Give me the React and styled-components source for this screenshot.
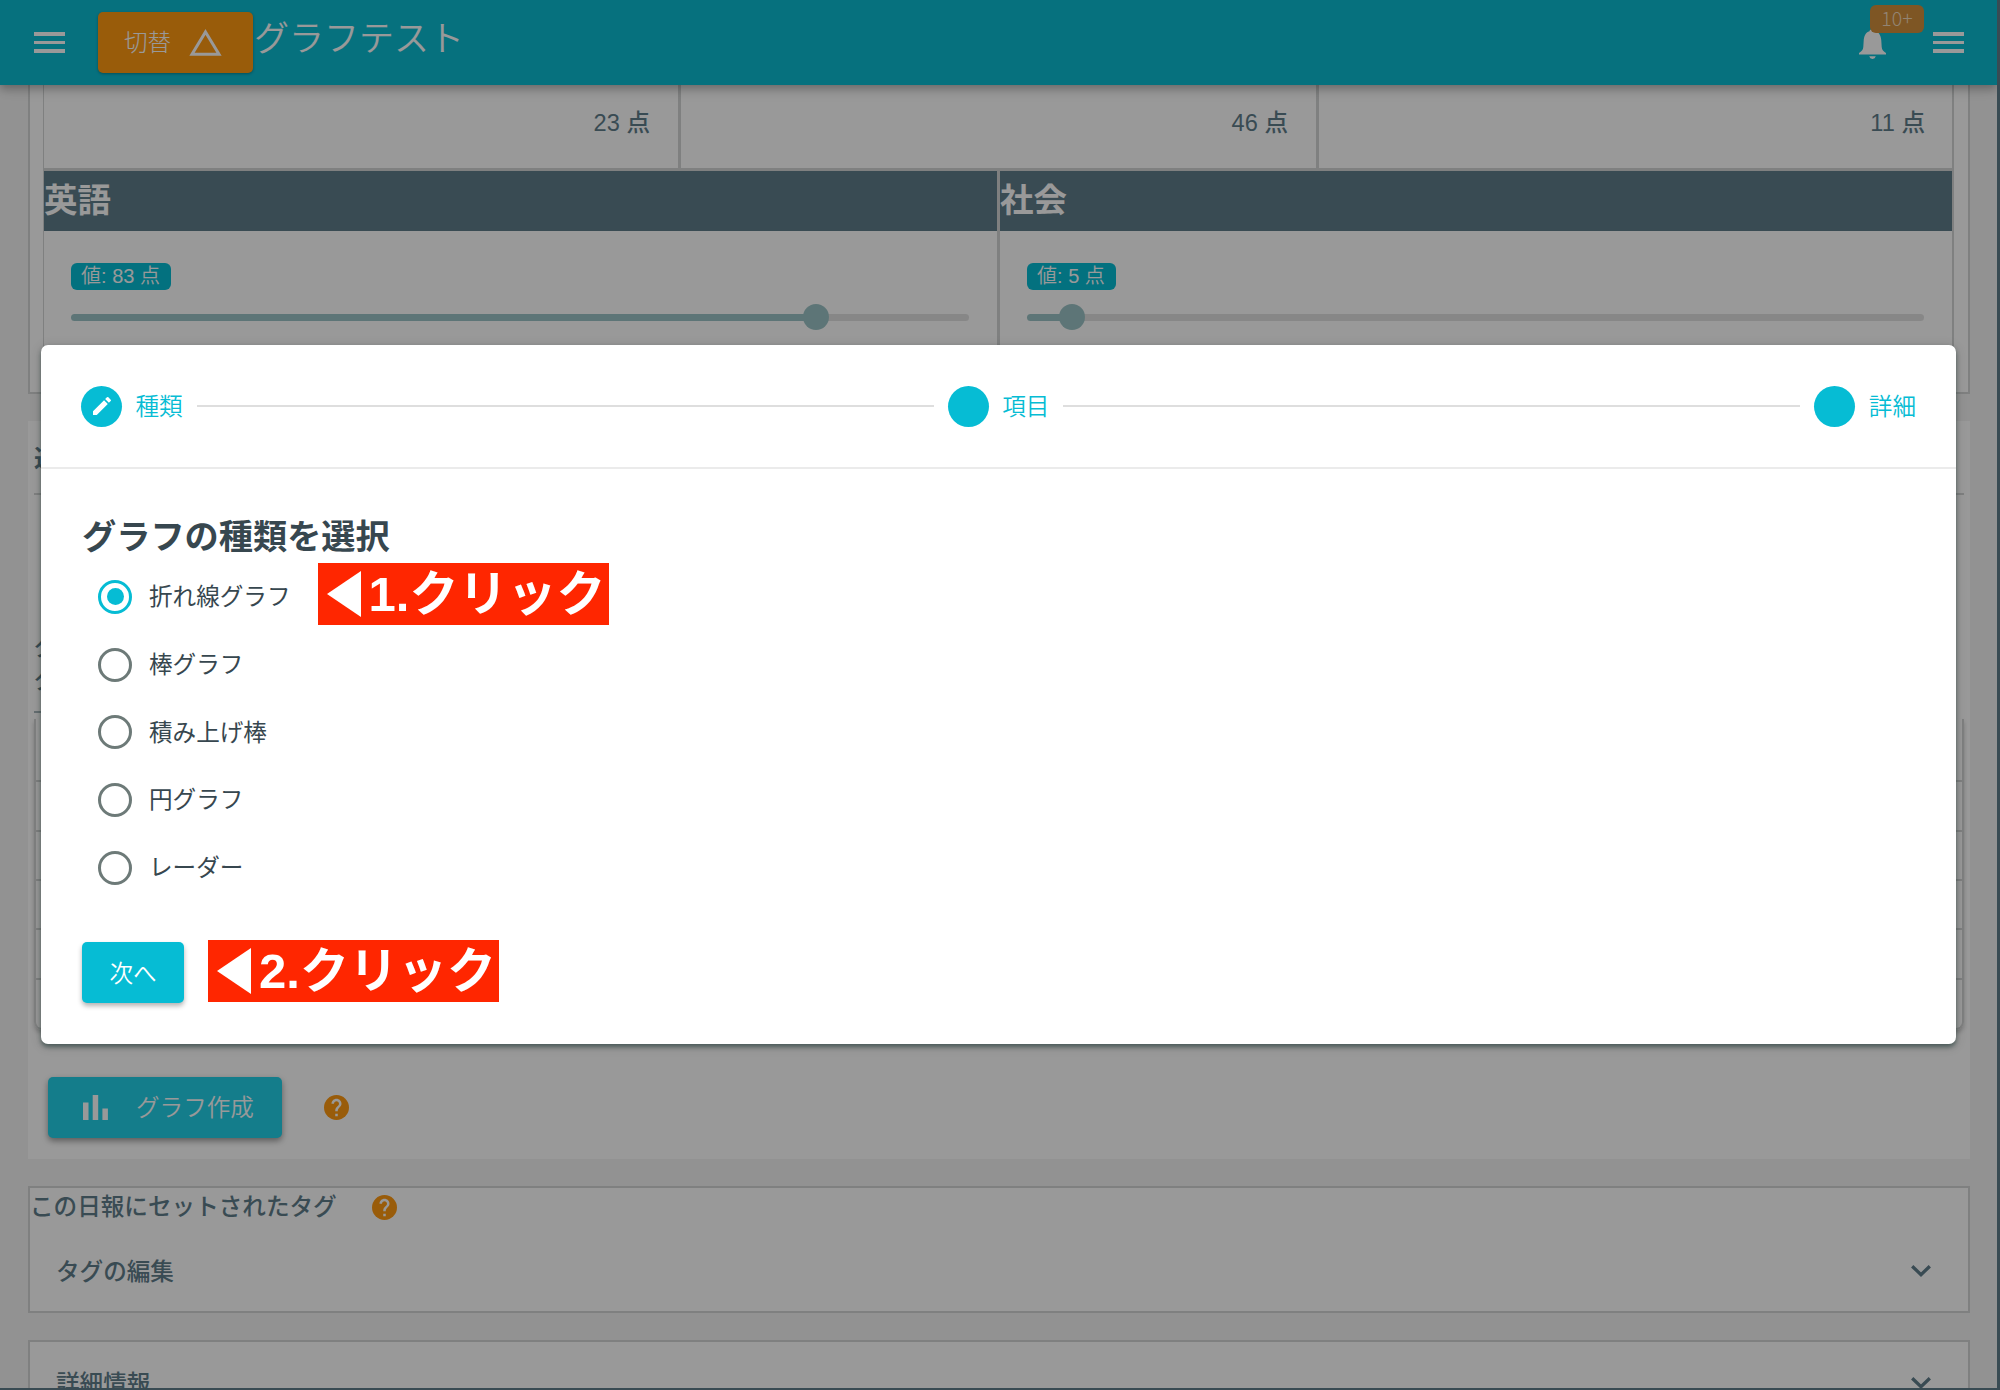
import React from "react";
import styled, { createGlobalStyle } from "styled-components";

const C = {
  cyan: "#06bcd4",
  slate: "#607d8b",
  ink: "#37474f",
  line: "#d4d6d6",
  page: "#f4f4f4",
};

const Global = createGlobalStyle`
  *, *::before, *::after { box-sizing: border-box; }
  html, body { margin: 0; padding: 0; background: ${C.slate}; }
  body {
    font-family: "Liberation Sans", "Noto Sans CJK JP", sans-serif;
    font-size: 23.6px;
    color: ${C.slate};
    overflow: hidden;
  }
  svg { display: block; flex: none; }
`;

const Screen = styled.div`
  position: relative;
  width: 2000px;
  height: 1390px;
  overflow: hidden;
  padding: 0 3px 2px 0;
`;
const Page = styled.div`
  display: flex;
  flex-direction: column;
  height: 1388px;
  background: ${C.page};
  overflow: hidden;
`;
const AppBar = styled.header`
  display: flex;
  align-items: flex-start;
  flex: none;
  height: 85px;
  padding: 12px 33px 0 34px;
  background: #0bbcd3;
  color: #fff;
  box-shadow: 0 3px 8px rgba(0, 0, 0, 0.22), 0 6px 12px rgba(0, 0, 0, 0.12);
  z-index: 1;
`;
const MenuButton = styled.button`
  display: flex;
  flex-direction: column;
  justify-content: space-between;
  width: 31px;
  height: 21px;
  margin: 20px 0 0;
  padding: 0;
  border: 0;
  background: none;
  i { height: 3.7px; background: #fff; }
`;
const SwitchButton = styled.button`
  display: flex;
  align-items: center;
  gap: 18px;
  width: 155px;
  height: 61px;
  margin-left: 33px;
  padding: 0 0 0 26px;
  border: 0;
  border-radius: 5px;
  background: #ff9a12;
  color: #fff;
  font: inherit;
  font-weight: 300;
  box-shadow: 0 1px 3px rgba(0, 0, 0, 0.3);
`;
const AppTitle = styled.h1`
  flex: 1;
  margin: 0;
  padding-left: 1px;
  font-size: 35px;
  font-weight: 350;
  line-height: 54px;
  white-space: nowrap;
`;
const BellWrap = styled.div`
  position: relative;
  margin: 17px 47px 0 0;
`;
const Count = styled.span`
  position: absolute;
  left: 11px;
  top: -24px;
  width: 54px;
  height: 28px;
  border-radius: 6px;
  background: #d28f3c;
  color: #f4dcc0;
  font-family: "Noto Sans CJK JP", sans-serif;
  font-weight: 300;
  font-size: 19.5px;
  line-height: 26px;
  text-align: center;
`;
const Label = styled.span`
  padding-bottom: ${(p) => p.$lift || 3}px;
  white-space: nowrap;
`;
const Body = styled.main`
  display: flex;
  flex-direction: column;
  padding: 0 27px 0 28px;
  font-weight: 500;
`;
const ScoreCard = styled.section`
  height: 309px;
  padding: 0 14px 0 13px;
  border: 2px solid ${C.line};
  border-top: 0;
  background: #fff;
`;
const ScoreTable = styled.div`
  height: 290px;
  border: solid ${C.line};
  border-width: 0 2px 0 1px;
`;
const Scores = styled.div`
  display: grid;
  grid-template-columns: 637px 638px 1fr;
  height: 86px;
  border-bottom: 3px solid ${C.line};
`;
const Score = styled.div`
  border-right: ${(p) => (p.$last ? 0 : "3px")} solid ${C.line};
  padding-right: ${(p) => (p.$last ? 27 : 28)}px;
  text-align: right;
  line-height: 77px;
`;
const Subjects = styled.div`
  display: grid;
  grid-template-columns: 956px 1fr;
  height: 200px;
`;
const Subject = styled.div`
  border-right: ${(p) => (p.$last ? 0 : "3px")} solid ${C.line};
`;
const SubjectName = styled.h2`
  margin: 0;
  height: 60px;
  background: ${C.slate};
  color: #fff;
  font-size: 33.5px;
  line-height: 60px;
`;
const SubjectBody = styled.div`
  padding: 32px 28px 0 27px;
`;
const Value = styled.span`
  display: block;
  width: fit-content;
  height: 27px;
  padding: 0 11px 0 10px;
  border-radius: 6px;
  background: ${C.cyan};
  color: #fff;
  font-size: 20px;
  font-weight: 350;
  line-height: 27px;
`;
const Slider = styled.div`
  display: flex;
  align-items: center;
  height: 26px;
  margin-top: 14px;
`;
const Filled = styled.div`
  height: 7px;
  border-radius: 4px 0 0 4px;
  background: #9cc4c6;
`;
const Thumb = styled.div`
  width: 26px;
  height: 26px;
  margin: 0 -13px;
  border-radius: 50%;
  background: #9cc4c6;
  z-index: 1;
`;
const Rest = styled.div`
  flex: 1;
  height: 7px;
  border-radius: 0 4px 4px 0;
  background: #e2e2e2;
`;
const ChartCard = styled.section`
  display: flex;
  flex-direction: column;
  height: 738px;
  margin: 27px 0;
  padding: 20px 6px 0;
  background: #fff;
`;
const ChartTitle = styled.h3`
  margin: 0;
  height: 54px;
  font-size: 24px;
  line-height: 36px;
  border-bottom: 2px solid #d4d6d6;
`;
const Notes = styled.div`
  width: 50%;
  height: 218px;
  padding-top: 136px;
  border-bottom: 2px solid #a9b8bd;
  font-size: 23px;
  line-height: 33px;
`;
const Records = styled.div`
  height: 311px;
  margin-top: 6px;
  padding-top: 13px;
  border: 2px solid ${C.line};
  border-top: 0;
  border-radius: 0 0 8px 8px;
  box-shadow: 0 3px 4px rgba(0, 0, 0, 0.2);
`;
const Record = styled.div`
  height: ${(p) => p.$h}px;
  border-bottom: 2px solid ${C.line};
`;
const Actions = styled.div`
  display: flex;
  align-items: center;
  gap: 42px;
  margin-top: 47px;
  padding-left: 14px;
`;
const CreateButton = styled.button`
  display: flex;
  align-items: center;
  gap: 28px;
  width: 234px;
  height: 61px;
  padding: 0 0 0 35px;
  border: 0;
  border-radius: 5px;
  background: #22d0e8;
  color: #fff;
  font: inherit;
  font-weight: 350;
  box-shadow: 0 3px 6px rgba(0, 0, 0, 0.4);
`;
const Panel = styled.section`
  height: ${(p) => p.$h}px;
  margin-bottom: 27px;
  border: 2px solid ${C.line};
  background: #fff;
`;
const PanelHead = styled.div`
  display: flex;
  align-items: center;
  gap: 35px;
  height: 39px;
`;
const Expander = styled.div`
  display: flex;
  align-items: center;
  justify-content: space-between;
  height: ${(p) => p.$h}px;
  padding: 0 37px 0 26px;
`;
const Backdrop = styled.div`
  position: absolute;
  inset: 0;
  padding: 345px 44px 0 41px;
  background: rgba(0, 0, 0, 0.4);
  z-index: 2;
`;
const Dialog = styled.div`
  height: 699px;
  border-radius: 7px;
  background: #fff;
  color: ${C.ink};
  box-shadow: 0 3px 4px rgba(20, 50, 45, 0.5), 0 2px 12px rgba(0, 0, 0, 0.16);
`;
const Stepper = styled.div`
  display: flex;
  align-items: center;
  gap: 14px;
  height: 124px;
  padding: 0 40px;
  border-bottom: 2px solid #ebebeb;
  color: ${C.cyan};
  font-weight: 350;
`;
const Step = styled.div`
  display: flex;
  align-items: center;
  gap: 13.5px;
`;
const StepDot = styled.span`
  display: flex;
  align-items: center;
  justify-content: center;
  width: 41px;
  height: 41px;
  border-radius: 50%;
  background: ${C.cyan};
`;
const StepLine = styled.span`
  flex: 1;
  height: 2px;
  background: #dedede;
`;
const DialogBody = styled.div`
  padding: 42px 41px 0;
`;
const DialogTitle = styled.h2`
  margin: 0;
  font-size: 34.2px;
  line-height: 52px;
`;
const Options = styled.div`
  display: flex;
  flex-direction: column;
`;
const Option = styled.label`
  display: flex;
  align-items: center;
  height: 67.7px;
  padding-left: 16px;
`;
const Radio = styled.span`
  display: flex;
  align-items: center;
  justify-content: center;
  width: 34px;
  height: 34px;
  margin-right: 17px;
  border: 3px solid ${(p) => (p.$on ? C.cyan : "#6d7a78")};
  border-radius: 50%;
  &::after {
    content: "";
    width: 17px;
    height: 17px;
    border-radius: 50%;
    background: ${(p) => (p.$on ? C.cyan : "transparent")};
  }
`;
const Callout = styled.span`
  display: flex;
  align-items: center;
  gap: 8px;
  width: 291px;
  height: 62px;
  margin-left: ${(p) => p.$gap}px;
  margin-bottom: ${(p) => p.$lift || 0}px;
  padding-left: 9px;
  background: #ff2600;
  color: #fff;
  font-size: 49px;
  font-weight: 700;
  line-height: 60px;
  white-space: nowrap;
`;
const Footer = styled.div`
  display: flex;
  align-items: flex-start;
  margin-top: 39px;
`;
const NextButton = styled.button`
  width: 102px;
  height: 61px;
  margin-top: 2px;
  border: 0;
  border-radius: 5px;
  background: ${C.cyan};
  color: #fff;
  font: inherit;
  font-weight: 350;
  padding: 0 0 2px;
  box-shadow: 0 3px 5px rgba(0, 0, 0, 0.3);
`;

const Menu = () => (
  <MenuButton aria-label="menu"><i /><i /><i /></MenuButton>
);
const Bell = () => (
  <svg width="27" height="31" viewBox="0 0 27 31" fill="#fff">
    <path d="M13.500 0c-1.700 0-2.800 1-3 2.200C6.500 3.500 5 7 4.700 11.500L4.300 18C4.100 21 2.500 22.500 0 24v1.600h27V24c-2.500-1.500-4.100-3-4.300-6l-.4-6.500C22 7 20.500 3.500 16.500 2.200 16.300 1 15.200 0 13.500 0zM10.200 27.300a3.400 3.400 0 0 0 6.600 0z" />
  </svg>
);
const Help = () => (
  <svg width="25" height="25" viewBox="2 2 20 20">
    <circle cx="12" cy="12" r="10" fill="#ff9a12" />
    <path fill="#fff" d="M13 19h-2v-2h2zm2.070-7.750-.9.920C13.450 12.900 13 13.500 13 15h-2v-.5c0-1.100.45-2.100 1.170-2.830l1.240-1.260c.37-.36.59-.86.59-1.410 0-1.100-.9-2-2-2s-2 .9-2 2H8c0-2.210 1.790-4 4-4s4 1.790 4 4c0 .88-.36 1.680-.93 2.250z" />
  </svg>
);
const Chevron = () => (
  <svg width="20" height="12" viewBox="0 0 20 12" fill="none" stroke={C.slate} strokeWidth="3.300">
    <path d="M1.200 1.200 10 9.700l8.800-8.500" />
  </svg>
);
const Pencil = () => (
  <svg width="24" height="24" viewBox="0 0 24 24" fill="#fff">
    <path d="M3 17.250V21h3.750L17.810 9.940l-3.750-3.750zM20.710 7.040a1 1 0 0 0 0-1.410l-2.340-2.340a1 1 0 0 0-1.410 0l-1.830 1.830 3.750 3.750z" />
  </svg>
);
const Bars = () => (
  <svg width="25" height="25" viewBox="0 0 25 25" fill="#fff">
    <path d="M0 7.500h5.500V25H0zM9.700 0h5.500v25H9.700zM19.400 13.500h5.500V25h-5.500z" />
  </svg>
);

const subjects = [
  { name: "英語", value: 83 },
  { name: "社会", value: 5 },
];
const kinds = ["折れ線グラフ", "棒グラフ", "積み上げ棒", "円グラフ", "レーダー"];
const steps = ["種類", "項目", "詳細"];

const Click = ({ n, gap, lift }) => (
  <Callout $gap={gap} $lift={lift}>
    <svg width="34" height="46" viewBox="0 0 34 46" fill="#fff"><path d="M34 0v46L0 23z" /></svg>
    <span>{n}.クリック</span>
  </Callout>
);

export default function App() {
  return (
    <Screen>
      <Global />
      <Page>
        <AppBar>
          <Menu />
          <SwitchButton>
            <Label>切替</Label>
            <svg width="33" height="27" viewBox="0 0 33 27" fill="none" stroke="#fff" strokeWidth="3">
              <path d="M16.500 3 30 25.200H3z" />
            </svg>
          </SwitchButton>
          <AppTitle>グラフテスト</AppTitle>
          <BellWrap>
            <Bell />
            <Count>10+</Count>
          </BellWrap>
          <Menu />
        </AppBar>
        <Body>
          <ScoreCard>
            <ScoreTable>
              <Scores>
                <Score>23 点</Score>
                <Score>46 点</Score>
                <Score $last>11 点</Score>
              </Scores>
              <Subjects>
                {subjects.map((s, i) => (
                  <Subject key={s.name} $last={i === 1}>
                    <SubjectName>{s.name}</SubjectName>
                    <SubjectBody>
                      <Value>値: {s.value} 点</Value>
                      <Slider>
                        <Filled style={{ width: `${s.value}%` }} />
                        <Thumb />
                        <Rest />
                      </Slider>
                    </SubjectBody>
                  </Subject>
                ))}
              </Subjects>
            </ScoreTable>
          </ScoreCard>
          <ChartCard>
            <ChartTitle>追</ChartTitle>
            <Notes>グ<br />グ</Notes>
            <Records>
              {[50, 50, 49, 49, 50].map((h, i) => <Record key={i} $h={h} />)}
            </Records>
            <Actions>
              <CreateButton><Bars /><Label>グラフ作成</Label></CreateButton>
              <Help />
            </Actions>
          </ChartCard>
          <Panel $h={127}>
            <PanelHead><Label $lift={5}>この日報にセットされたタグ</Label><Help /></PanelHead>
            <Expander $h={88}><Label>タグの編集</Label><Chevron /></Expander>
          </Panel>
          <Panel $h={127}>
            <Expander $h={82}><Label>詳細情報</Label><Chevron /></Expander>
          </Panel>
        </Body>
      </Page>
      <Backdrop>
        <Dialog>
          <Stepper>
            {steps.map((s, i) => (
              <React.Fragment key={s}>
                {i > 0 && <StepLine />}
                <Step>
                  <StepDot>{i === 0 && <Pencil />}</StepDot>
                  <Label>{s}</Label>
                </Step>
              </React.Fragment>
            ))}
          </Stepper>
          <DialogBody>
            <DialogTitle>グラフの種類を選択</DialogTitle>
            <Options>
              {kinds.map((k, i) => (
                <Option key={k}>
                  <Radio $on={i === 0} />
                  <Label>{k}</Label>
                  {i === 0 && <Click n={1} gap={27} lift={5} />}
                </Option>
              ))}
            </Options>
            <Footer>
              <NextButton>次へ</NextButton>
              <Click n={2} gap={24} />
            </Footer>
          </DialogBody>
        </Dialog>
      </Backdrop>
    </Screen>
  );
}
